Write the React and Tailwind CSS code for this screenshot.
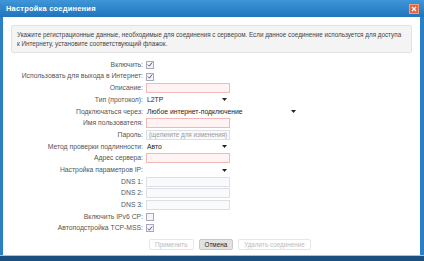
const rows = [
  { label: "Включить:", type: "check", checked: true },
  { label: "Использовать для выхода в Интернет:", type: "check", checked: true },
  { label: "Описание:", type: "input", error: true },
  { label: "Тип (протокол):", type: "select", value: "L2TP" },
  { label: "Подключаться через:", type: "select", value: "Любое интернет-подключение", wide: true },
  { label: "Имя пользователя:", type: "input", error: true },
  { label: "Пароль:", type: "input", placeholder: "(щелкните для изменения)" },
  { label: "Метод проверки подлинности:", type: "select", value: "Авто" },
  { label: "Адрес сервера:", type: "input", error: true },
  { label: "Настройка параметров IP:", type: "select", value: "" },
  { label: "DNS 1:", type: "input" },
  { label: "DNS 2:", type: "input" },
  { label: "DNS 3:", type: "input" },
  { label: "Включить IPv6 CP:", type: "check", checked: false },
  { label: "Автоподстройка TCP-MSS:", type: "check", checked: true },
];

function Control({ row }) {
  if (row.type === "check") {
    return (
      <div className="w-[8px] h-[8px] border border-[#a9a9b8] bg-[#f4f4fa] flex items-center justify-center">
        {row.checked && (
          <svg width="7" height="7" viewBox="0 0 7 7">
            <path d="M1 3.6 L2.8 5.4 L6 1.2" stroke="#4a4a7a" strokeWidth="1.1" fill="none" />
          </svg>
        )}
      </div>
    );
  }
  if (row.type === "select") {
    return (
      <div
        className={`h-[10px] ${row.wide ? "w-[153px]" : "w-[84px]"} flex items-center justify-between pl-[1px] pr-[3px] text-[#222] whitespace-nowrap`}
      >
        <span>{row.value}</span>
        <svg width="5" height="3" viewBox="0 0 5 3">
          <path d="M0 0 H5 L2.5 3 Z" fill="#222" />
        </svg>
      </div>
    );
  }
  return (
    <div
      className={`h-[10px] w-[84px] border flex items-center px-[2px] overflow-hidden whitespace-nowrap text-[6.3px] ${
        row.error ? "border-[#f2b8b8] bg-[#fff3f3]" : "border-[#dcdfe3] bg-[#f8fafc]"
      } text-[#9a9a9a]`}
    >
      {row.placeholder}
    </div>
  );
}

export default function App() {
  return (
    <div
      className="w-[424px] h-[261px] flex flex-col bg-[#2a7fc6] overflow-hidden"
      style={{ fontFamily: '"Liberation Sans", Arial, sans-serif' }}
    >
      <div className="h-[17px] flex items-center justify-between pl-[6px] pr-[5px] bg-gradient-to-b from-[#3f96d8] to-[#1f74bd]">
        <span className="text-white text-[7.5px] font-bold tracking-[0.2px]">Настройка соединения</span>
        <div className="w-[10px] h-[10px] bg-[#e8603c] border border-[#f0a080] flex items-center justify-center">
          <svg width="6" height="6" viewBox="0 0 6 6">
            <path d="M1 1 L5 5 M5 1 L1 5" stroke="white" strokeWidth="1.3" />
          </svg>
        </div>
      </div>
      <div className="flex-1 ml-[3px] mr-[4px] bg-white flex flex-col pt-[8px] text-[6.8px] text-[#333]">
        <div className="mx-[8px] h-[28px] bg-[#f4f4f4] border border-[#e2e2e2] rounded-[2px] px-[5px] flex flex-col justify-center gap-[2px] text-[6.3px] text-[#444] leading-[7px]">
          <span>
            Укажите регистрационные данные, необходимые для соединения с сервером. Если данное соединение используется для доступа
          </span>
          <span>к Интернету, установите соответствующий флажок.</span>
        </div>
        <div className="mt-[6px] flex flex-col">
          {rows.map((row) => (
            <div key={row.label} className="h-[11.7px] flex items-center">
              <div className="w-[143px] text-right pr-[3px] text-[#555] whitespace-nowrap">{row.label}</div>
              <Control row={row} />
            </div>
          ))}
        </div>
        <div className="mt-[5px] flex items-center pl-[146px] gap-[5px] text-[6.3px]">
          <div className="h-[11px] px-[5px] border border-[#e6e6e6] rounded-[2px] bg-white text-[#bbb] flex items-center">
            Применить
          </div>
          <div className="h-[11px] px-[5px] border border-[#c8c8c8] rounded-[2px] bg-[#e2e2e2] text-[#222] flex items-center">
            Отмена
          </div>
          <div className="h-[11px] px-[5px] border border-[#e6e6e6] rounded-[2px] bg-white text-[#bbb] flex items-center">
            Удалить соединение
          </div>
        </div>
      </div>
      <div className="h-[6px] border-t border-[#9cc6e8] bg-[#1b4f80]" />
    </div>
  );
}
